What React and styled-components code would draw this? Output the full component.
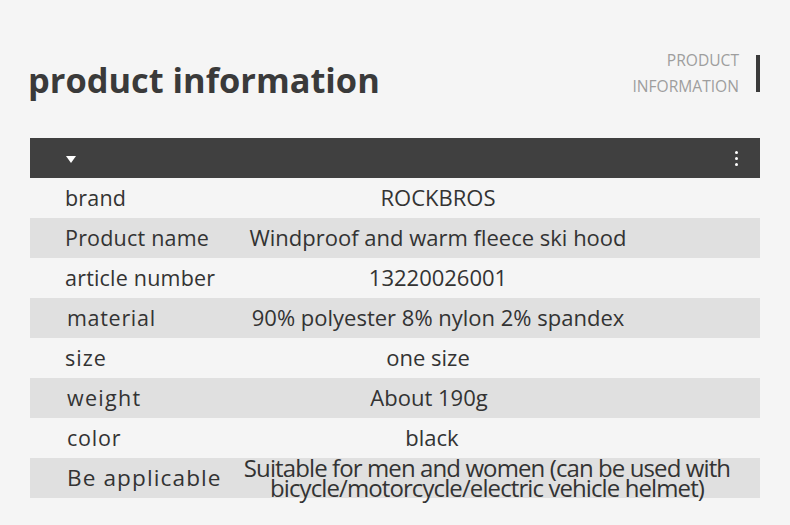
import React from "react";
import styled, { createGlobalStyle } from "styled-components";

const ROWS = [
  { label: "brand", value: "ROCKBROS", track: 0.2 },
  { label: "Product name", value: "Windproof and warm fleece ski hood", track: 0.2 },
  { label: "article number", value: "13220026001", track: 0.2 },
  { label: "material", value: "90% polyester 8% nylon 2% spandex", track: 0.7, indent: 2 },
  { label: "size", value: "one size", track: 1, shift: 10 },
  { label: "weight", value: "About 190g", track: 1.3, indent: 2, shift: 9 },
  { label: "color", value: "black", track: 0.8, indent: 2, shift: 6 },
  {
    label: "Be applicable",
    value: "Suitable for men and women (can be used with bicycle/motorcycle/electric vehicle helmet)",
    track: 1.1,
    indent: 2,
    wide: true,
  },
];

const Global = createGlobalStyle`
  body{
    margin:0;
    background:#f5f5f5;
    font-family:"Open Sans","Noto Sans",sans-serif;
  }
`;

const Page = styled.div`
  width:790px;
  height:525px;
  background:#f5f5f5;
  padding:48px 30px 0 30px;
  box-sizing:border-box;
`;

const Head = styled.div`
  display:flex;
  justify-content:space-between;
  align-items:flex-start;
  height:90px;
`;

const Title = styled.h1`
  margin:12px 0 0 -2px;
  font-size:34.4px;
  font-weight:700;
  color:#3a3a3a;
  line-height:40px;
`;

const Side = styled.div`
  display:flex;
  align-items:center;
  gap:17px;
  margin-top:-1px;
`;

const SideText = styled.div`
  text-align:right;
  color:#9e9e9e;
  font-size:15.6px;
  line-height:26px;
  text-transform:uppercase;
`;

const Bar = styled.div`
  width:4px;
  height:37px;
  background:#3a3a3a;
`;

const Toolbar = styled.div`
  height:40px;
  background:#404040;
  display:flex;
  align-items:center;
  justify-content:space-between;
  padding:0 22px 0 36px;
`;

const Caret = styled.div`
  width:0;
  height:0;
  border-left:5px solid transparent;
  border-right:5px solid transparent;
  border-top:7px solid #fff;
  margin-top:3px;
`;

const Dots = styled.div`
  display:flex;
  flex-direction:column;
  gap:3px;
  span{
    width:3px;
    height:3px;
    border-radius:50%;
    background:#fff;
  }
`;

const Row = styled.div`
  height:40px;
  display:grid;
  grid-template-columns:210px 1fr;
  align-items:center;
  background:${p => (p.$shade ? "#e0e0e0" : "transparent")};
  color:#333;
`;

const Label = styled.div`
  padding-left:${p => 35 + (p.$indent || 0)}px;
  font-size:${p => (p.$wide ? "22.6px" : "21.5px")};
  letter-spacing:${p => p.$track}px;
  margin-top:-2px;
`;

const Value = styled.div`
  text-align:center;
  font-size:22px;
  padding-right:${p => 124 + (p.$shift || 0) * 2}px;
  margin-top:-2px;
  ${p => p.$wide && `
    font-size:24px;
    line-height:20px;
    letter-spacing:-0.9px;
    margin-top:-1px;
    padding-right:26px;
  `}
`;

export default function App() {
  return (
    <Page>
      <Global />
      <Head>
        <Title>product information</Title>
        <Side>
          <SideText>Product<br />information</SideText>
          <Bar />
        </Side>
      </Head>
      <Toolbar>
        <Caret />
        <Dots><span /><span /><span /></Dots>
      </Toolbar>
      {ROWS.map((r, i) => (
        <Row key={r.label} $shade={i % 2 === 1}>
          <Label $wide={r.wide} $track={r.track} $indent={r.indent}>{r.label}</Label>
          <Value $wide={r.wide} $shift={r.shift}>{r.value}</Value>
        </Row>
      ))}
    </Page>
  );
}
